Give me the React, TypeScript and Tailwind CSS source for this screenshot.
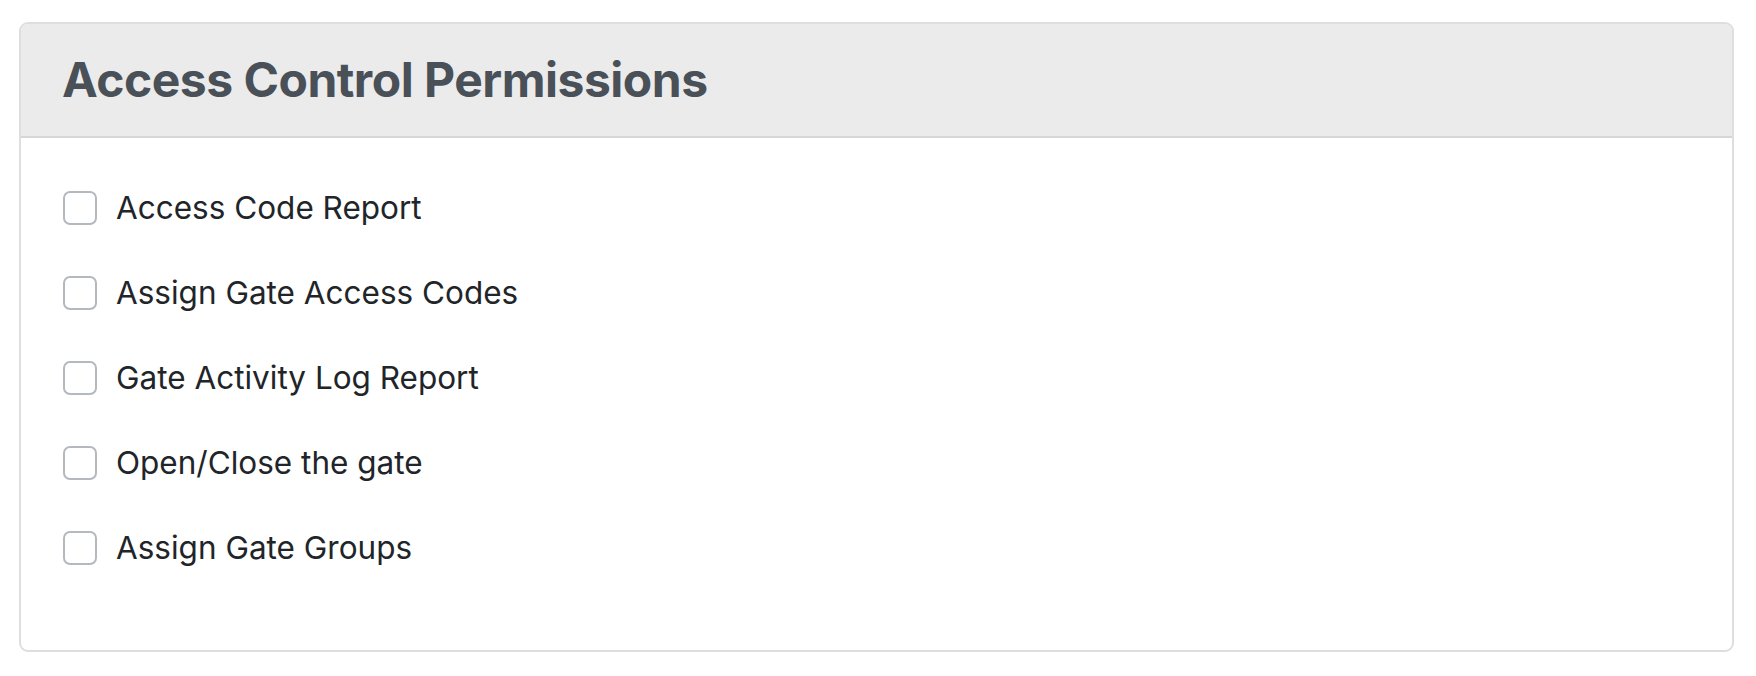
const PERMISSIONS = [
  "Access Code Report",
  "Assign Gate Access Codes",
  "Gate Activity Log Report",
  "Open/Close the gate",
  "Assign Gate Groups",
];

export default function App() {
  return (
    <div className="min-h-screen bg-white pt-[22px] pr-[22px] pl-[19px] font-['Inter',sans-serif]">
      <div className="overflow-hidden rounded-[9px] border-2 border-[#dedede] bg-white">
        <div className="flex h-[114px] items-center border-b-2 border-[#d6d6d6] bg-[#ebebeb] px-[41px]">
          <h1 className="text-[48px] leading-none font-bold tracking-[-0.5px] text-[#495057]">Access Control Permissions</h1>
        </div>
        <div className="flex flex-col gap-[51px] px-[42px] pt-[53px] pb-[85px]">
          {PERMISSIONS.map((p) => (
            <label key={p} className="flex items-center gap-[19px]">
              <input
                type="checkbox"
                className="h-[34px] w-[34px] appearance-none rounded-[7px] border-2 border-[#b4b9bf] bg-white"
              />
              <span className="text-[31.5px] leading-none text-[#212529]">{p}</span>
            </label>
          ))}
        </div>
      </div>
    </div>
  );
}
